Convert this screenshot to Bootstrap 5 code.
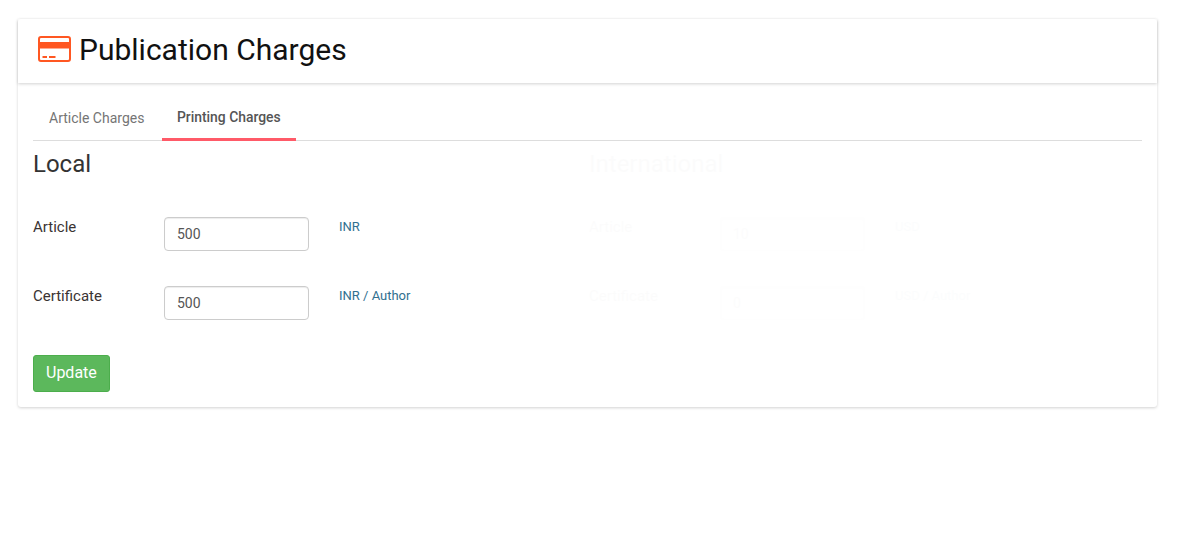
<!DOCTYPE html>
<html lang="en">
<head>
<meta charset="utf-8">
<title>Publication Charges</title>
<link rel="stylesheet" href="https://cdn.jsdelivr.net/npm/bootstrap@5.3.0/dist/css/bootstrap.min.css">
<style>
html,body{background:#fff;}
body{font-family:Roboto,"Liberation Sans",sans-serif;font-size:14px;color:#333;padding:19px 28px 0 18px;min-height:542px;}
.pc-panel{background:#fff;border-radius:3px;box-shadow:0 1px 3px rgba(0,0,0,.18);}
.pc-head{height:64px;padding:0 20px 2px;box-shadow:0 1px 3px rgba(0,0,0,.18);position:relative;}
.pc-icon{margin-bottom:2px;flex:none;}
.pc-title{font-size:30px;font-weight:400;color:#111;line-height:1;margin:0;}
.pc-body{padding:12px 15px 15px;margin-top:2px;}
.pc-tabs{border-bottom:1px solid #ddd;height:44px;margin-bottom:0;}
.pc-tabs .nav-link{color:#757575;font-size:14px;padding:0 16px;height:44px;line-height:42px;border:0;border-radius:0;margin-right:2px;}
.pc-tabs .nav-link.active{color:#555;font-size:13.9px;font-weight:500;border-bottom:3px solid #ff5a68;background:none;line-height:41px;height:44px;padding:0 15px 0 14.5px;}
.pc-cols{display:flex;}
.pc-col{width:556px;flex:none;}
.pc-ghost{opacity:.012;}
.pc-sub{font-size:24px;font-weight:400;color:#333;line-height:26px;margin:10px 0 0;}
.pc-row{height:69px;display:flex;}
.pc-rows{margin-top:40px;}
.pc-label{width:131px;flex:none;font-size:15px;padding-top:0;line-height:20px;color:#3a3333;}
.pc-input.form-control{width:145px;height:34px;flex:none;font-size:14px;color:#555;padding:6px 12px;border:1px solid #ccc;border-radius:4px;box-shadow:inset 0 1px 1px rgba(0,0,0,.075);}
.pc-unit{margin-left:30px;font-size:13px;line-height:20px;padding-top:0;color:#31708f;}
.pc-btn.btn{background:#5cb85c;border:1px solid #4cae4c;color:#fff;font-size:16px;padding:0 12px 2px;height:37px;line-height:20px;border-radius:3px;display:block;}
</style>
</head>
<body>
<div class="pc-panel">
  <div class="pc-head d-flex align-items-center gap-2">
    <svg class="pc-icon" width="33" height="26" viewBox="0 0 33 26" aria-hidden="true"><rect x="1" y="1" width="31" height="24" rx="2" fill="none" stroke="#ff5722" stroke-width="2"/><rect x="1" y="6" width="31" height="6.5" fill="#ff5722"/><rect x="4.5" y="20" width="4.5" height="2" fill="#ff5722"/><rect x="11" y="20" width="6.5" height="2" fill="#ff5722"/></svg>
    <h1 class="pc-title">Publication Charges</h1>
  </div>
  <div class="pc-body">
    <ul class="nav pc-tabs">
      <li class="nav-item"><a class="nav-link" href="#">Article Charges</a></li>
      <li class="nav-item"><a class="nav-link active" href="#">Printing Charges</a></li>
    </ul>
    <div class="pc-cols">
      <div class="pc-col">
        <h2 class="pc-sub">Local</h2>
        <div class="pc-rows">
          <div class="pc-row"><div class="pc-label">Article</div><input class="form-control pc-input" value="500"><div class="pc-unit">INR</div></div>
          <div class="pc-row"><div class="pc-label">Certificate</div><input class="form-control pc-input" value="500"><div class="pc-unit">INR / Author</div></div>
        </div>
      </div>
      <div class="pc-col pc-ghost">
        <h2 class="pc-sub">International</h2>
        <div class="pc-rows">
          <div class="pc-row"><div class="pc-label">Article</div><input class="form-control pc-input" value="10"><div class="pc-unit">USD</div></div>
          <div class="pc-row"><div class="pc-label">Certificate</div><input class="form-control pc-input" value="0"><div class="pc-unit">USD / Author</div></div>
        </div>
      </div>
    </div>
    <button class="btn pc-btn" type="button">Update</button>
  </div>
</div>
<script src="https://cdn.jsdelivr.net/npm/bootstrap@5.3.0/dist/js/bootstrap.bundle.min.js"></script>
</body>
</html>
